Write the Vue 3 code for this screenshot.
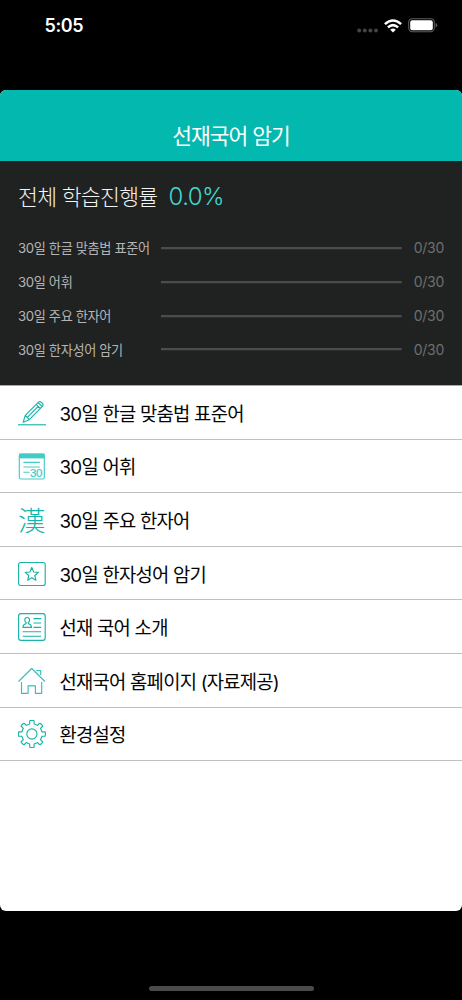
<script setup>
const progress = [
  { label: '30일 한글 맞춤법 표준어', done: 0, total: 30 },
  { label: '30일 어휘', done: 0, total: 30 },
  { label: '30일 주요 한자어', done: 0, total: 30 },
  { label: '30일 한자성어 암기', done: 0, total: 30 },
]
const menu = [
  { icon: 'pencil', label: '30일 한글 맞춤법 표준어' },
  { icon: 'calendar', label: '30일 어휘' },
  { icon: 'hanja', label: '30일 주요 한자어' },
  { icon: 'star', label: '30일 한자성어 암기' },
  { icon: 'profile', label: '선재 국어 소개' },
  { icon: 'home', label: '선재국어 홈페이지 (자료제공)' },
  { icon: 'gear', label: '환경설정' },
]
</script>

<template>
  <div class="phone">
    <div class="status">
      <span class="time">5:05</span>
      <div class="indicators">
        <svg class="dots" width="22" height="5" viewBox="0 0 22 5">
          <circle v-for="n in 4" :key="n" :cx="n * 5.6 - 3.4" cy="2.5" r="2" fill="#444" />
        </svg>
        <svg class="wifi" width="18" height="14" viewBox="0 0 18 14">
          <g fill="none" stroke="#fff" stroke-width="2.5">
            <path d="M.9 5.2Q9-2.2 17.1 5.2" />
            <path d="M3.9 8.4Q9 3.8 14.1 8.4" />
          </g>
          <path d="M6.2 10.7Q9 8.4 11.8 10.7L9 13.6z" fill="#fff" />
        </svg>
        <svg class="battery" width="30" height="15" viewBox="0 0 30 15">
          <rect x=".7" y=".7" width="25.6" height="13" rx="3.6" fill="none" stroke="#5c5c5c" stroke-width="1.1" />
          <rect x="2.2" y="2.2" width="22.6" height="10" rx="2" fill="#fff" />
          <path d="M27.6 5Q29.3 5.6 29.3 7.2T27.6 9.4z" fill="#5c5c5c" />
        </svg>
      </div>
    </div>

    <main class="app">
      <header class="title">선재국어 암기</header>
      <section class="summary">
        <div class="overall"><span class="overall-label">전체 학습진행률</span><span class="percent">0.0%</span></div>
        <div v-for="p in progress" :key="p.label" class="progress-row">
          <span class="progress-label">{{ p.label }}</span>
          <svg class="track" width="241" height="4" viewBox="0 0 241 4">
            <path d="M0 2.1H240.7" stroke="#4b4d4c" stroke-width="2.3" />
          </svg>
          <span class="count">{{ p.done }}/{{ p.total }}</span>
        </div>
      </section>
      <nav class="menu">
        <div v-for="m in menu" :key="m.icon" class="item">
          <svg v-if="m.icon === 'pencil'" class="icon" viewBox="0 0 28 28">
            <path d="M0 25.8h28" />
            <path d="M5.2 23.2L7.3 16.4 20.7 2.9Q22 2 23.4 3.4L24.5 4.5Q25.8 5.9 24.6 7.1L11.3 20.7zM7.3 16.4L11.3 20.7M18.3 5.4L22.2 9.4M20.2 3.6L24.1 7.6M9.4 18.4L20.2 7.4" />
          </svg>
          <svg v-else-if="m.icon === 'calendar'" class="icon soft" viewBox="0 0 28 28">
            <rect x="1.3" y="2" width="25" height="25" rx="1.8" />
            <path class="solid" d="M1 1.6h25.6v4.8H1z" />
            <path d="M5.4 10.3h16.4M5.4 15h16.4M5.4 20.2h6.2" />
            <text class="thirty" x="12.1" y="24.8">30</text>
          </svg>
          <span v-else-if="m.icon === 'hanja'" class="icon hanja">漢</span>
          <svg v-else-if="m.icon === 'star'" class="icon" viewBox="0 0 28 28">
            <rect x=".6" y="2.5" width="26.6" height="23" rx="2" />
            <path d="M13.8 7.6L15.7 12 20.4 12.4 16.8 15.5 17.9 20.2 13.8 17.7 9.7 20.2 10.8 15.5 7.2 12.4 11.9 12z" />
          </svg>
          <svg v-else-if="m.icon === 'profile'" class="icon" viewBox="0 0 28 28">
            <rect x=".6" y=".6" width="26.6" height="26.8" rx="2.4" />
            <path d="M15.5 5.6h7.6M15.5 10h7.6M15.5 14.4h7.6M4.6 18.7h18.5M4.6 23.2h18.5" />
            <path d="M4.9 14.4Q4.9 11.6 7.9 10.8L8.2 9.8Q6.7 8.6 6.8 6.8 7 4.5 9.2 4.5T11.6 6.8Q11.7 8.6 10.2 9.8L10.5 10.8Q13.5 11.6 13.5 14.4z" />
          </svg>
          <svg v-else-if="m.icon === 'home'" class="icon light" viewBox="0 0 28 28">
            <path d="M.5 14.5L13.7 1.5 26.9 14.5M3.5 14.9V26.3H10.1V18.8H17.4V26.3H23.7V14.9M18.2 3.5H22.7V8.1" />
          </svg>
          <svg v-else class="icon" viewBox="0 0 28 28">
            <circle cx="13.9" cy="14" r="5.1" />
            <path d="M11.7 4V1.2Q11.7.5 12.4.5H15.4Q16.1.5 16.1 1.2V4Q18 4.5 19.5 5.4L21.4 3.5Q22 3 22.5 3.5L24.4 5.4Q24.9 6 24.4 6.5L22.5 8.4Q23.4 9.9 23.9 11.8H26.6Q27.4 11.8 27.4 12.5V15.5Q27.4 16.2 26.6 16.2H23.9Q23.4 18.1 22.5 19.6L24.4 21.5Q24.9 22 24.4 22.6L22.5 24.5Q22 25 21.4 24.5L19.5 22.6Q18 23.5 16.1 24V26.8Q16.1 27.5 15.4 27.5H12.4Q11.7 27.5 11.7 26.8V24Q9.8 23.5 8.3 22.6L6.4 24.5Q5.8 25 5.3 24.5L3.4 22.6Q2.9 22 3.4 21.5L5.3 19.6Q4.4 18.1 3.9 16.2H1.2Q.4 16.2.4 15.5V12.5Q.4 11.8 1.2 11.8H3.9Q4.4 9.9 5.3 8.4L3.4 6.5Q2.9 6 3.4 5.4L5.3 3.5Q5.8 3 6.4 3.5L8.3 5.4Q9.8 4.5 11.7 4z" />
          </svg>
          <span class="item-label">{{ m.label }}</span>
        </div>
      </nav>
    </main>
    <div class="home-indicator"></div>
  </div>
</template>

<style>
body { margin: 0; background: #000; }
</style>

<style scoped>
.phone {
  width: 462px;
  height: 1000px;
  box-sizing: border-box;
  overflow: hidden;
  background: #000;
  display: flex;
  flex-direction: column;
  font-family: Inter, "Noto Sans CJK KR", sans-serif;
}
.status {
  height: 89.5px;
  flex: none;
  box-sizing: border-box;
  padding: 15px 24px 0 44.5px;
  display: flex;
  justify-content: space-between;
  align-items: flex-start;
  color: #fff;
}
.time { font-size: 18px; font-weight: 600; line-height: 22px; letter-spacing: -0.4px; }
.indicators { display: flex; height: 21px; align-items: center; }
.dots { margin-top: 9px; }
.wifi { margin: 0 6px 0 5px; }
.app {
  height: 821px;
  flex: none;
  border-radius: 6px;
  overflow: hidden;
  background: #fff;
}
.title {
  height: 71.5px;
  box-sizing: border-box;
  padding-top: 31px;
  background: #02b8af;
  color: #fff;
  text-align: center;
  font-size: 21.5px;
  font-weight: 400;
  line-height: 30px;
  letter-spacing: -1px;
}
.summary {
  height: 225px;
  box-sizing: border-box;
  padding: 17px 18px 0;
  background: #202221;
  border-bottom: 1px solid #aaa;
}
.overall {
  display: flex;
  align-items: center;
  height: 36px;
  margin-bottom: 17px;
  color: #f4f4f4;
  font-size: 21.6px;
  font-weight: 300;
  letter-spacing: -0.7px;
}
.overall-label { margin-top: -1px; }
.percent { margin: 1px 0 0 11px; color: #3fd9ce; font-size: 24px; letter-spacing: -0.6px; }
.progress-row { display: flex; align-items: center; height: 33.85px; }
.progress-label { width: 143px; flex: none; white-space: nowrap; color: #b5b5b5; font-size: 13.2px; letter-spacing: -0.36px; }
.track { flex: none; }
.count { margin-left: auto; color: #6e6f6e; font-size: 14px; letter-spacing: -0.3px; }
.item {
  height: 53.6px;
  box-sizing: border-box;
  display: flex;
  align-items: center;
  padding-left: 18px;
  border-bottom: 1px solid #bfc0c0;
}
.icon {
  width: 28px;
  height: 28px;
  flex: none;
  margin-top: 1px;
  fill: none;
  stroke: #19b3aa;
  stroke-width: 1.15;
  stroke-linejoin: round;
}
.soft { stroke: #43ccc5; }
.light { stroke: #3cbeb6; }
.solid { fill: #43ccc5; stroke: none; }
.thirty { fill: #43ccc5; stroke: #43ccc5; stroke-width: 0.25; font: 400 11.5px "Liberation Sans", sans-serif; letter-spacing: -0.4px; }
.hanja { margin-top: -1px; color: #12b5ac; font: 300 27.5px/28px "Noto Sans CJK KR", sans-serif; }
.item-label { margin-left: 13.5px; color: #050505; font-size: 18.8px; letter-spacing: -0.76px; white-space: nowrap; }
.home-indicator { width: 165px; height: 5.5px; margin: 75px auto 0; border-radius: 3px; background: #4b4b4b; }
</style>
